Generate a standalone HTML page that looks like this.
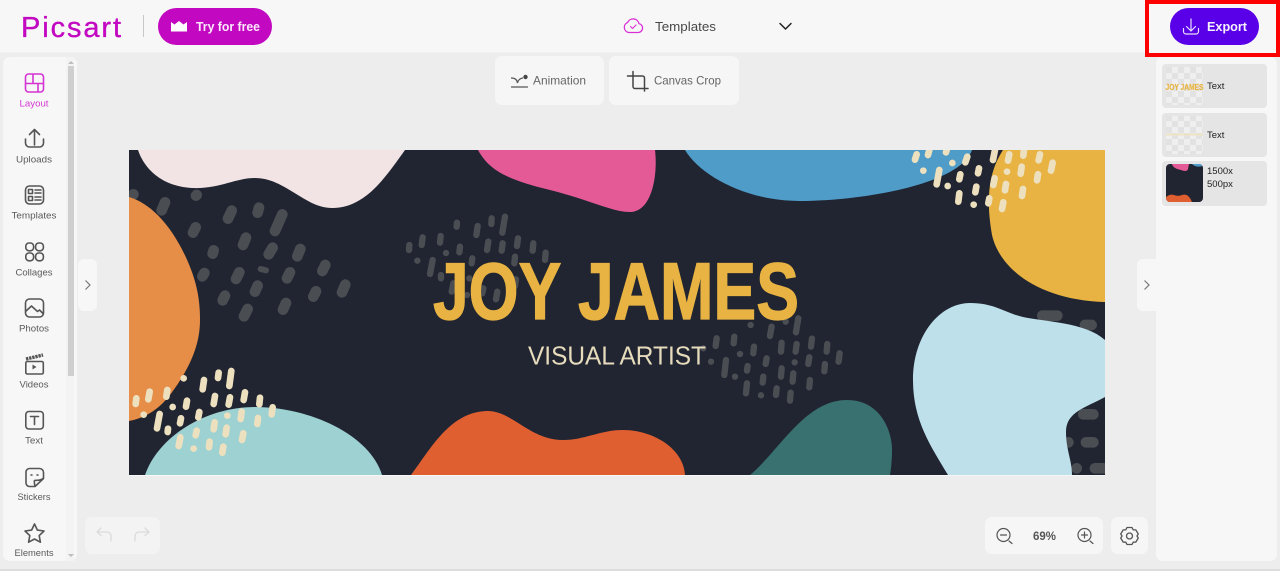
<!DOCTYPE html>
<html lang="en"><head><meta charset="utf-8"><title>Picsart</title>
<style>
html,body{margin:0;padding:0;width:1280px;height:571px;overflow:hidden;background:#ededed}
svg{display:block}
text{font-family:"Liberation Sans",sans-serif}
.l{font-size:9.5px;fill:#5a5a5a;text-anchor:middle}
.i{fill:none;stroke:#555;stroke-width:1.6;stroke-linecap:round;stroke-linejoin:round}
.d{fill:none;stroke:#4a4d52;stroke-linecap:round}
.c{fill:none;stroke:#ece0bf;stroke-linecap:round}
</style></head><body>
<svg width="1280" height="571" viewBox="0 0 1280 571" xmlns="http://www.w3.org/2000/svg">
<defs>
<pattern id="ck" width="12" height="12" patternUnits="userSpaceOnUse" x="1166" y="67"><rect width="12" height="12" fill="#efefef"/><rect width="6" height="6" fill="#e2e2e2"/><rect x="6" y="6" width="6" height="6" fill="#e2e2e2"/></pattern>
<clipPath id="cv"><rect x="129" y="150" width="976" height="325"/></clipPath>
<clipPath id="th"><rect x="1166" y="164" width="37" height="38" rx="4"/></clipPath>
</defs>
<rect width="1280" height="571" fill="#ededed"/>
<rect width="1280" height="52" fill="#f7f7f7"/>
<rect y="52" width="1280" height="1" fill="#f1f1f1"/>
<rect y="569" width="1280" height="2" fill="#dcdcdc"/>

<!-- top bar -->
<text x="21" y="37" font-size="29" fill="#c209c1" stroke="#c209c1" stroke-width=".35" stroke-linejoin="round" textLength="100" lengthAdjust="spacing">Picsart</text>
<rect x="143" y="15" width="1" height="22" fill="#c8c8c8"/>
<rect x="158" y="8" width="114" height="37" rx="18.5" fill="#c209c1"/>
<path d="M171 22l3.500 2.500 4.500-3.500 4.500 3.500 3.500-2.500v9.500h-16z" fill="#fff"/>
<text x="196" y="31" font-size="13" font-weight="700" fill="#fbe8fb" textLength="64" lengthAdjust="spacingAndGlyphs">Try for free</text>
<path d="M628.500 32.500h9.500a4.500 4.500 0 0 0 1-8.900 6 6 0 0 0-11.300-1.200 5.300 5.300 0 0 0 .8 10.100z" fill="none" stroke="#d92fd6" stroke-width="1.300"/>
<path d="M630.500 26.500l2 2 3.500-3.500" fill="none" stroke="#d92fd6" stroke-width="1.100" stroke-linecap="round" stroke-linejoin="round"/>
<text x="655" y="31" font-size="13" fill="#484848" textLength="61" lengthAdjust="spacingAndGlyphs">Templates</text>
<path d="M780 23.500l5.500 5.500 5.500-5.500" fill="none" stroke="#222" stroke-width="1.500" stroke-linecap="round" stroke-linejoin="round"/>
<rect x="1147" y="2" width="131" height="53" fill="#f7f7f7" stroke="#fe0000" stroke-width="4"/>
<rect x="1170" y="8" width="89" height="37" rx="18.500" fill="#5a00e8"/>
<path d="M1191 19v12M1186.500 26.500l4.500 4.500 4.500-4.500M1183.500 28.500v3a2.500 2.500 0 0 0 2.500 2.500h10a2.500 2.500 0 0 0 2.500-2.500v-3" fill="none" stroke="#e9defc" stroke-width="1.200" stroke-linecap="round" stroke-linejoin="round"/>
<text x="1207" y="31" font-size="13" font-weight="700" fill="#f6f1fe" textLength="40" lengthAdjust="spacingAndGlyphs">Export</text>

<!-- left panel -->
<rect x="3" y="57" width="74" height="504" rx="7" fill="#f7f7f7"/>
<rect x="66" y="57" width="8" height="504" fill="#f3f3f3"/>
<rect x="68" y="66" width="6" height="310" fill="#cfcfcf"/>
<path d="M71 61l-3 3h6zM71 557l-3-3h6z" fill="#bdbdbd"/>
<rect x="78" y="259" width="19" height="52" rx="6" fill="#f7f7f7"/>
<path d="M85.500 280.500l4.500 4.500-4.500 4.500" fill="none" stroke="#777" stroke-width="1.200"/>

<!-- sidebar icons -->
<g fill="none" stroke="#d435d2" stroke-width="1.600" stroke-linejoin="round"><rect x="25.500" y="74" width="18" height="18" rx="3"/><path d="M25.500 83.500h18M33 74v9.500M38 83.500v8.500"/></g>
<text class="l" x="34" y="106.500" style="fill:#d435d2" textLength="29" lengthAdjust="spacingAndGlyphs">Layout</text>
<path class="i" d="M34.500 130v15M29.500 134.500l5-5 5 5M25.500 139v4a4 4 0 0 0 4 4h10a4 4 0 0 0 4-4v-4"/>
<text class="l" x="34" y="162.500" textLength="36" lengthAdjust="spacingAndGlyphs">Uploads</text>
<rect class="i" x="25.500" y="186" width="18" height="18" rx="4"/>
<path class="i" stroke-width="1.300" d="M28.500 189.500h4v4h-4zM28.500 196.500h4v4h-4zM35 190h6M35 193h6M35 197h6M35 200h6"/>
<text class="l" x="34" y="218.500" textLength="45" lengthAdjust="spacingAndGlyphs">Templates</text>
<rect class="i" x="25.800" y="243" width="7.800" height="7.800" rx="3.200"/><rect class="i" x="35.600" y="243" width="7.800" height="7.800" rx="3.200"/><rect class="i" x="25.800" y="253" width="7.800" height="7.800" rx="3.200"/><rect class="i" x="35.600" y="253" width="7.800" height="7.800" rx="3.200"/>
<text class="l" x="34" y="275.500" textLength="37" lengthAdjust="spacingAndGlyphs">Collages</text>
<rect class="i" x="25.500" y="299" width="18" height="18" rx="4"/>
<path class="i" stroke-width="1.300" d="M26 311l5.500-5 6 5.500 2-1.500 3.500 3.500"/>
<text class="l" x="34" y="331.500" textLength="30" lengthAdjust="spacingAndGlyphs">Photos</text>
<rect class="i" x="25.800" y="361.500" width="17.500" height="12.500" rx="1.500"/>
<path d="M26 359l17-4" fill="none" stroke="#555" stroke-width="3.400" stroke-dasharray="2.400 .8"/>
<path d="M32.500 364.500v5l4-2.500z" fill="#555"/>
<text class="l" x="34" y="387.500" textLength="29" lengthAdjust="spacingAndGlyphs">Videos</text>
<rect class="i" x="25.800" y="411.500" width="17.500" height="17.500" rx="3"/>
<path class="i" d="M30.500 416.500h8M34.500 416.500v8"/>
<text class="l" x="34" y="443.500" textLength="18" lengthAdjust="spacingAndGlyphs">Text</text>
<path class="i" d="M29.500 468.500h10a4 4 0 0 1 4 4v6l-8.500 8h-5.500a3.500 3.500 0 0 1-3.500-3.500v-11a3.500 3.500 0 0 1 3.500-3.500zM35 486.500c-.5-3-1-4.500-.5-6 2-.5 6 .5 8.500-2"/>
<path d="M31 475h1M37 475h1" stroke="#555" stroke-width="1.500" stroke-linecap="round"/>
<text class="l" x="34" y="500" textLength="33" lengthAdjust="spacingAndGlyphs">Stickers</text>
<path class="i" d="M34.500 524l2.900 6.100 6.600.9-4.800 4.600 1.200 6.600-5.900-3.200-5.900 3.200 1.200-6.600-4.800-4.600 6.600-.9z"/>
<text class="l" x="34" y="556" textLength="39" lengthAdjust="spacingAndGlyphs">Elements</text>

<!-- top tools -->
<rect x="495" y="56" width="109" height="49" rx="7" fill="#f6f6f6"/>
<rect x="609" y="56" width="130" height="49" rx="7" fill="#f6f6f6"/>
<path d="M511.500 78c3 0 5.500 1.500 6 5 .5-3 2.500-4.500 5-5M511.500 87h16" fill="none" stroke="#555" stroke-width="1.200" stroke-linecap="round"/>
<circle cx="525.500" cy="77" r="2.200" fill="#444"/>
<text x="533" y="84.500" font-size="12" fill="#666" textLength="53" lengthAdjust="spacingAndGlyphs">Animation</text>
<path d="M633 71.500v15a2 2 0 0 0 2 2h13M627.500 76h15a2 2 0 0 1 2 2v13" fill="none" stroke="#444" stroke-width="1.500" stroke-linecap="round" stroke-linejoin="round"/>
<text x="654" y="84.500" font-size="12" fill="#666" textLength="67" lengthAdjust="spacingAndGlyphs">Canvas Crop</text>

<!-- canvas -->
<rect x="129" y="150" width="976" height="325" fill="#212532"/>
<g clip-path="url(#cv)">
<g transform="translate(125 145) scale(.3333)">
<g class="d" stroke-width="32"><path d="M25 148h.1M120 172l-10 24M215 150l-2 2M320 197l-11 24M402 188l-4 15M472 208l-22 50M212 247l-8 16M363 278l-9 22M443 308l-12 20M526 312l-9 22M266 316l-3 10M238 384l-6 10M343 382l-10 20M495 382l-9 18M601 360l-9 18M398 422l-8 18M300 452l-7 14M573 439l-8 16M661 419l-10 23M368 492l-11 22M483 474l-9 20"/><path stroke-width="18" d="M407 372l16 4"/></g>
</g>
<g transform="translate(400 210) scale(.3333)"><g class="d" stroke-width="19">
<path d="M28 105l-1 15M68 82l-3 23M122 78l-2 20M171 38l-1 12M233 48l-4 27M275 25l-1 17M315 20l-8 48M52 152h.1M138 129h.1M180 110l-2 17M265 95l-4 25M308 100l-3 22M354 85l-3 23M400 100l-2 22M437 128l-2 22M98 150l-8 42M123 195v10M217 145l-2 15M345 140l-2 20M208 205h.1M160 220l-5 25M250 235l-3 15M201 255h.1M292 245l-4 23M348 208l-3 20"/>
<path d="M1052 345h.1M1115 350l-5 28M1157 335h.1M1195 325l-7 42M950 385l-3 23M1003 380l-2 20M1145 398l-2 27M1190 402l-3 23M1236 386l-3 24M1282 402l-2 23M1319 430l-3 25M910 415h.1M1062 410l-2 20M1020 432h.1M978 450l-5 45M933 455h.1M1100 445l-3 17M1184 457h.1M1228 442l-3 20M1275 462l-2 22M1043 468l-2 14M1005 500h.1M1145 475l-2 25M1180 490l-2 25M1090 500l-2 18M1230 510l-2 22M1041 520l-3 30M1130 535l-2 20M1083 556h.1M1172 548l-2 24"/>
</g></g>
<g transform="translate(880 300) scale(.3333)"><g class="d" stroke-width="32"><path d="M487 47h45M615 75h20M610 343h30M565 427h.1M618 427h22M590 505h.1M645 505h25"/></g></g>

<path d="M138 150C143 165 158 186 192 188C220 189 235 178 255 178C285 178 305 208 332 208C365 208 385 178 405 150Z" fill="#f2e4e4"/>
<path d="M129 197C150 203 172 225 188 262C197 283 200 300 200 320C200 345 190 368 170 395C158 410 145 418 129 421Z" fill="#e68d47"/>
<path d="M145 475C158 437 205 407 255 407C310 407 370 435 382 475Z" fill="#9dd1d2"/>
<path d="M411 475C430 450 450 411 488 411C512 411 530 440 563 440C585 440 600 430 623 430C655 430 684 450 685 475Z" fill="#e05f31"/>
<path d="M750 475C780 450 805 400 847 400C880 400 892 430 892 450C892 460 891 470 890 475Z" fill="#38716f"/>
<path d="M478 150C490 172 510 180 550 190C590 200 612 212 630 212C652 212 658 175 655 150Z" fill="#e45a96"/>
<path d="M685 150C700 175 745 201 800 201C860 201 960 185 972 150Z" fill="#4f9cc9"/>
<path d="M1003 150C990 170 985 195 992 235C1000 270 1040 300 1105 302V150Z" fill="#e8b342"/>
<path d="M948 475C930 445 913 420 913 380C913 335 940 303 970 303C995 303 1005 313 1023 317C1045 322 1085 322 1105 340V397C1085 408 1066 412 1066 432C1066 450 1072 460 1072 475Z" fill="#bde0ea"/>

<g transform="translate(125 310) scale(.3333)"><g class="c" stroke-width="20"><path d="M34 265l-2 17M74 245l-4 23M127 240l-3 20M176 205h.1M237 210l-4 28M281 188l-2 16M319 183l-6 45M56 314h.1M143 291h.1M186 272l-3 18M270 258l-4 24M315 262l-4 22M360 247l-4 23M405 263l-2 20M443 292l-3 21M104 312l-8 43M129 356l-1 10M168 325l-3 15M223 306l-3 16M350 305l-3 22M307 317h.1M269 337l-3 21M399 324l-2 18M305 353l-3 20M215 362l-3 14M355 370l-4 20M166 382l-5 26M254 395l-2 17M206 416h.1M295 410l-3 18"/></g></g>
<g transform="translate(880 145) scale(.3333)"><g class="c" stroke-width="20"><path d="M110 28l-5 16M148 15l-4 15M200 15l-2 7M262 35l-6 17M130 77h.1M217 54h.1M178 75l-8 43M203 123h.1M241 88l-3 15M297 70l-3 15M345 15l-6 30M388 28l-4 19M432 15l-2 17M480 28l-4 18M518 53l-5 24M381 80h.1M425 65l-3 21M344 100l-4 20M378 117l-3 19M474 88l-3 18M289 125l-3 17M429 132l-3 21M238 145l-3 25M281 179h.1M328 160l-3 15M370 172l-4 20"/></g></g>

<text x="433" y="319" font-size="81" font-weight="700" fill="#e8b342" stroke="#e8b342" stroke-width="1.200" textLength="366" lengthAdjust="spacingAndGlyphs">JOY JAMES</text>
<text x="528" y="364.500" font-size="25.500" fill="#e6dcbc" textLength="178" lengthAdjust="spacingAndGlyphs">VISUAL ARTIST</text>
</g>
<rect x="129" y="475" width="976" height="1" fill="#f7f7f7"/>

<!-- bottom controls -->
<rect x="85" y="517" width="75" height="37" rx="7" fill="#f3f3f3"/>
<path d="M97 532l4-4M97 532l4 3.500M97 532h10a4 4 0 0 1 4 4v5M149 532l-4-4M149 532l-4 3.500M149 532h-10a4 4 0 0 0-4 4v5" fill="none" stroke="#dbdbdb" stroke-width="1.300" stroke-linecap="round" stroke-linejoin="round"/>
<rect x="985" y="517" width="118" height="37" rx="7" fill="#f6f6f6"/>
<rect x="1111" y="517" width="37" height="37" rx="7" fill="#f6f6f6"/>
<g fill="none" stroke="#555" stroke-width="1.200" stroke-linecap="round"><circle cx="1003.500" cy="535" r="6.500"/><path d="M1000.500 535h6M1009 541l3 2.500"/><circle cx="1084.500" cy="535" r="6.500"/><path d="M1081.500 535h6M1084.500 532v6M1090 541l3 2.500"/></g>
<text x="1033" y="540" font-size="12" font-weight="700" fill="#555" textLength="23" lengthAdjust="spacingAndGlyphs">69%</text>
<path d="M1127 527.500h5l1.200 2.300 2.600.1 2.500 4.100-1.400 2 1.400 2-2.500 4.100-2.600.1-1.200 2.300h-5l-1.200-2.300-2.600-.1-2.500-4.100 1.400-2-1.400-2 2.500-4.100 2.600-.1z" fill="none" stroke="#555" stroke-width="1.300" stroke-linejoin="round"/>
<circle cx="1129.500" cy="536" r="3" fill="none" stroke="#555" stroke-width="1.300"/>

<!-- right panel -->
<rect x="1137" y="259" width="24" height="52" rx="6" fill="#f7f7f7"/>
<path d="M1144.500 280.500l4.500 4.500-4.500 4.500" fill="none" stroke="#777" stroke-width="1.200"/>
<rect x="1156" y="57" width="121" height="504" rx="7" fill="#f7f7f7"/>
<rect x="1162" y="64" width="105" height="44" rx="4" fill="#e5e5e5"/>
<rect x="1162" y="113" width="105" height="44" rx="4" fill="#e5e5e5"/>
<rect x="1162" y="161" width="105" height="45" rx="4" fill="#e5e5e5"/>
<rect x="1166" y="67" width="37" height="38" fill="url(#ck)"/>
<rect x="1166" y="116" width="37" height="38" fill="url(#ck)"/>
<text x="1165.500" y="90" font-size="8" font-weight="700" fill="#e8b342" stroke="#e8b342" stroke-width=".2" textLength="38" lengthAdjust="spacingAndGlyphs">JOY JAMES</text>
<rect x="1166" y="133.500" width="37" height="2" fill="#eee4c4"/>
<text x="1207" y="89" font-size="9.500" fill="#222">Text</text>
<text x="1207" y="138" font-size="9.500" fill="#222">Text</text>
<g clip-path="url(#th)"><rect x="1166" y="164" width="37" height="38" fill="#212532"/>
<path d="M1172 164c1 4 5 5 9 6 3 1 6 2 7-1l1-5z" fill="#e45a96"/><path d="M1192 164c3 3 7 3 11 2v-2z" fill="#4f9cc9"/><path d="M1166 197c3-2 5-3 8-2 3 1 5 1 8 0 4-1 7 0 10 7h-26z" fill="#e05f31"/></g>
<text x="1207" y="174" font-size="9.500" fill="#222">1500x</text>
<text x="1207" y="187" font-size="9.500" fill="#222">500px</text>
</svg>
</body></html>
